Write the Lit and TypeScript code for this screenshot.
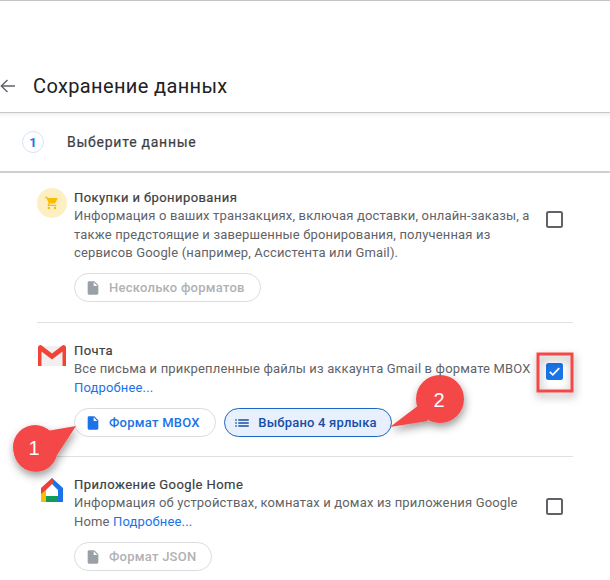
import { LitElement, html, css } from "lit";
import { customElement } from "lit/decorators.js";

const DOC = "M6 2c-1.1 0-1.99.9-1.99 2L4 20c0 1.1.89 2 1.99 2H18c1.1 0 2-.9 2-2V8l-6-6H6zm7 7V3.5L18.5 9H13z";
const LIST = "M3 13h2v-2H3v2zm0 4h2v-2H3v2zm0-8h2V7H3v2zm4 4h14v-2H7v2zm0 4h14v-2H7v2zM7 7v2h14V7H7z";
const CART = "M7 18c-1.1 0-1.99.9-1.99 2S5.9 22 7 22s2-.9 2-2-.9-2-2-2zM1 2v2h2l3.6 7.59-1.35 2.45c-.16.28-.25.61-.25.96 0 1.1.9 2 2 2h12v-2H7.42c-.14 0-.25-.11-.25-.25l.03-.12.9-1.63h7.45c.75 0 1.41-.41 1.75-1.03l3.58-6.49c.08-.14.12-.31.12-.48 0-.55-.45-1-1-1H5.21l-.94-2H1zm16 16c-1.1 0-1.99.9-1.99 2s.89 2 1.99 2 2-.9 2-2-.9-2-2-2z";

const icon = (d: string) => html`<svg class="ci" viewBox="0 0 24 24"><path d=${d} fill="currentColor"></path></svg>`;

@customElement("app-root")
export class AppRoot extends LitElement {
  static styles = css`
    :host { display: block; width: 610px; height: 580px; position: relative; overflow: hidden; background: #fff;
      font-family: Roboto, "Liberation Sans", sans-serif; color: #5f6368; }
    .top { height: 1px; background: #c4c4c4; }
    .head { height: 112px; box-sizing: border-box; display: flex; align-items: flex-end; padding: 0 0 13px 0; gap: 18px;
      border-bottom: 1px solid #c8c8c8; }
    .head svg { width: 15px; height: 14px; margin-bottom: 6px; flex: none; }
    .head h1 { margin: 0; font-size: 20px; line-height: 26px; font-weight: 400; color: #202124; letter-spacing: 0.36px; }
    .step { height: 60px; display: flex; align-items: center; padding-left: 22px; gap: 23px; box-sizing: border-box;
      border-bottom: 2px solid #cfcfcf; background: linear-gradient(#f0f0f0, #fff 5px); }
    .num { width: 22px; height: 22px; box-sizing: border-box; border: 1px solid #d2e3fc; border-radius: 50%; display: flex; align-items: center;
      justify-content: center; font-size: 13px; font-weight: 700; color: #1a73e8; }
    .step span { font-size: 14px; font-weight: 400; color: #3c4043; letter-spacing: 0.75px; -webkit-text-stroke: 0.2px #3c4043; }
    .list { padding: 0 37px; }
    .item { display: flex; border-bottom: 1px solid #e0e0e0; }
    .item:last-child { border-bottom: none; }
    .i1 { height: 150px; padding-top: 15px; box-sizing: border-box; }
    .i2 { height: 134px; padding-top: 18px; box-sizing: border-box; }
    .i3 { padding-top: 18px; }
    .ico { width: 37px; flex: none; }
    .body { flex: 1; min-width: 0; }
    .t { font-size: 13px; line-height: 19px; font-weight: 400; color: #3c4043; letter-spacing: 0.42px; -webkit-text-stroke: 0.2px #3c4043; }
    .d { font-size: 13px; line-height: 18.7px; color: #5f6368; letter-spacing: 0.16px; width: 462px; }
    .d a { color: #1a73e8; text-decoration: none; }
    .chips { display: flex; gap: 8px; margin-top: 10px; }
    .gap11 { margin-top: 11px; }
    .chip { height: 29px; box-sizing: border-box; border: 1px solid #dadce0; border-radius: 15px; display: flex;
      align-items: center; gap: 8px; padding: 0 15px 0 10px; font-size: 13px; font-weight: 500; letter-spacing: 0.25px; color: #b0b2b5; background: #fff; }
    .ci { width: 16px; height: 16px; flex: none; color: #9aa0a6; }
    .on { color: #1a73e8; }
    .on .ci { color: #1a73e8; }
    .sel { color: #174ea6; background: #e8f0fe; border: 1.5px solid #1a66c4; padding: 0 14px 0 8.5px; gap: 7px; letter-spacing: 0.2px; }
    .sel .ci { color: #174ea6; width: 18px; height: 18px; }
    .box { width: 17px; height: 17px; box-sizing: border-box; border: 2px solid #5f6368; border-radius: 2.5px; flex: none; }
    .right { width: 44px; flex: none; display: flex; justify-content: flex-end; padding-right: 10px; box-sizing: border-box; }
    .m1 { margin-top: 23px; }
    .m2 { margin-top: 22px; }
    .chk { border: none; background: #1a73e8; display: flex; }
    .chk svg { width: 17px; height: 17px; }
    .mail { margin: 4px 0 0 1px; }
    .home { margin: 3px 0 0 4px; }
    .over { position: absolute; left: 0; top: 0; width: 610px; height: 580px; pointer-events: none; }
    .over text { font-family: "Liberation Sans", sans-serif; font-size: 20px; fill: #fff; text-anchor: middle; }
    .ic { display: block; }
  `;

  render() {
    return html`
      <div class="top"></div>
      <div class="head">
        <svg viewBox="0 0 15 14"><path d="M15 7H1.500M7.500 1 1.300 7l6.200 6" fill="none" stroke="#5f6368" stroke-width="1.400"></path></svg>
        <h1>Сохранение данных</h1>
      </div>
      <div class="step"><div class="num">1</div><span>Выберите данные</span></div>
      <div class="list">
        <div class="item i1">
          <div class="ico">
            <svg class="ic" width="30" height="30" viewBox="0 0 30 30"><circle cx="15" cy="15" r="15" fill="#feefc3"></circle>
              <g transform="translate(7.500 7.500) scale(.62)"><path d=${CART} fill="#fbbc04"></path></g></svg>
          </div>
          <div class="body">
            <div class="t">Покупки и бронирования</div>
            <div class="d">Информация о ваших транзакциях, включая доставки, онлайн-заказы, а также предстоящие и завершенные бронирования, полученная из сервисов Google (например, Ассистента или Gmail).</div>
            <div class="chips"><div class="chip">${icon(DOC)}Несколько форматов</div></div>
          </div>
          <div class="right"><div class="box m1"></div></div>
        </div>
        <div class="item i2">
          <div class="ico">
            <svg class="ic mail" width="28" height="21" viewBox="0 0 28 21">
              <path d="M1 1h26v20H1z" fill="#f0f0f0"></path>
              <path d="M0 2.500C0 1 1 0 3 0l11 8.500L25 0c2 0 3 1 3 2.500V21h-3.500V6.500L14 14.500 3.500 6.500V21H0z" fill="#f14336"></path>
            </svg>
          </div>
          <div class="body">
            <div class="t">Почта</div>
            <div class="d">Все письма и прикрепленные файлы из аккаунта Gmail в формате MBOX <a>Подробнее...</a></div>
            <div class="chips gap11">
              <div class="chip on">${icon(DOC)}Формат MBOX</div>
              <div class="chip sel">${icon(LIST)}Выбрано 4 ярлыка</div>
            </div>
          </div>
          <div class="right"><div class="box chk m2">
            <svg viewBox="0 0 18 18"><path d="M4 9.500l3.200 3L14 5.500" fill="none" stroke="#fff" stroke-width="1.800"></path></svg>
          </div></div>
        </div>
        <div class="item i3">
          <div class="ico">
            <svg class="ic home" width="22" height="24" viewBox="0 0 22 24">
              <path d="M11 0 22 10v14h-5V12L11 6l-2-3z" fill="#1a73e8"></path>
              <path d="M5 18h12v6H5z" fill="#0f9d58"></path>
              <path d="M0 14l5-3v13H0z" fill="#fbbc04"></path>
              <path d="M0 10 11 0l2 4.500L11 6 5 12l-5 4z" fill="#ea4335"></path>
            </svg>
          </div>
          <div class="body">
            <div class="t">Приложение Google Home</div>
            <div class="d">Информация об устройствах, комнатах и домах из приложения Google Home <a>Подробнее...</a></div>
            <div class="chips gap11"><div class="chip">${icon(DOC)}Формат JSON</div></div>
          </div>
          <div class="right"><div class="box m1"></div></div>
        </div>
      </div>
      <svg class="over" viewBox="0 0 610 580">
        <defs><filter id="s" x="-30%" y="-30%" width="170%" height="170%"><feDropShadow dx="1" dy="4" stdDeviation="4" flood-color="#000" flood-opacity=".4"></feDropShadow></filter></defs>
        <g filter="url(#s)">
          <path d="M76 426 47 431A22 22 0 1 0 57 455z" fill="#f44646"></path>
          <circle cx="35" cy="447" r="22" fill="#f44646"></circle>
        </g>
        <text x="34" y="455">1</text>
        <g filter="url(#s)">
          <path d="M390 427 419 405 428 421z" fill="#f44646"></path>
          <circle cx="440" cy="399" r="24" fill="#f44646"></circle>
        </g>
        <text x="439" y="407">2</text>
        <rect x="538" y="354" width="34" height="37" fill="none" stroke="#f44646" stroke-width="3" filter="url(#s)"></rect>
      </svg>
    `;
  }
}
